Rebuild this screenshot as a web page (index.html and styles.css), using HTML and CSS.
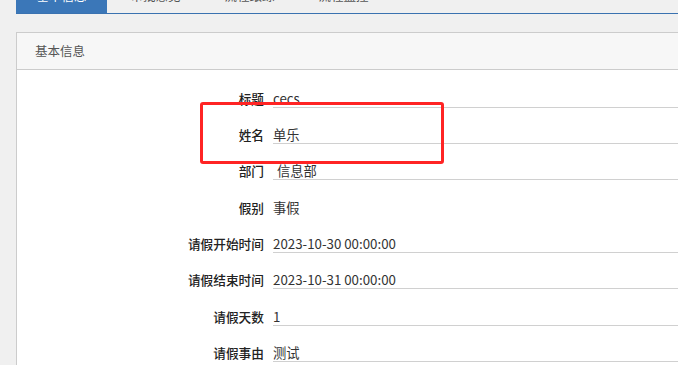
FILE: index.html
```html
<!DOCTYPE html>
<html lang="zh-CN">
<head>
<meta charset="utf-8">
<title>请假详情</title>
<link rel="stylesheet" href="styles.css">
</head>
<body>
<div class="page">
  <div class="tabs">
    <div class="tab active">基本信息</div>
    <div class="tab">审批意见</div>
    <div class="tab">流程跟踪</div>
    <div class="tab">流程监控</div>
  </div>
  <div class="panel">
    <div class="panel-head">基本信息</div>
    <div class="panel-body">
      <div class="row"><div class="label">标题</div><div class="value">cecs</div></div>
      <div class="row"><div class="label">姓名</div><div class="value">单乐</div></div>
      <div class="row"><div class="label">部门</div><div class="value indent">信息部</div></div>
      <div class="row"><div class="label">假别</div><div class="value plain">事假</div></div>
      <div class="row"><div class="label">请假开始时间</div><div class="value">2023-10-30 00:00:00</div></div>
      <div class="row"><div class="label">请假结束时间</div><div class="value">2023-10-31 00:00:00</div></div>
      <div class="row"><div class="label">请假天数</div><div class="value">1</div></div>
      <div class="row"><div class="label">请假事由</div><div class="value">测试</div></div>
    </div>
  </div>
  <div class="highlight"></div>
</div>
</body>
</html>
```
FILE: styles.css
```css
html, body {
  margin: 0;
  padding: 0;
  background: #f0f0f0;
  overflow: hidden;
}
body {
  font-family: "Noto Sans CJK SC", "Noto Sans", sans-serif;
  font-size: 13px;
  color: #333;
}
.page {
  display: flow-root;
  position: relative;
  width: 740px;
  padding-left: 16px;
  height: 365px;
  overflow: hidden;
}
.tabs {
  display: flex;
  gap: 3px;
  margin-top: -22px;
  border-bottom: 1px solid #3a72b0;
}
.tab {
  width: 91px;
  height: 35px;
  line-height: 35px;
  text-align: center;
  font-size: 12.5px;
  color: #555;
}
.tab.active {
  background: #3b77b8;
  color: #fff;
}
.panel {
  margin-top: 18px;
  border: 1px solid #cccccc;
  background: #fff;
}
.panel-head {
  height: 36px;
  line-height: 36px;
  background: #f7f7f7;
  border-bottom: 1px solid #cccccc;
  padding-left: 18px;
  color: #555;
  font-size: 12.5px;
}
.panel-body {
  padding-top: 1.5px;
  padding-bottom: 40px;
}
.row {
  display: grid;
  grid-template-columns: 247px 1fr;
  column-gap: 9px;
  padding-top: 19.3px;
  line-height: 16px;
  font-size: 12.7px;
}
.label {
  text-align: right;
  color: #222;
  font-weight: 500;
}
.value {
  border-bottom: 1px solid #d0d0d0;
  color: #333;
  font-size: 13.3px;
}
.value.indent {
  padding-left: 4px;
}
.value.plain {
  border-bottom-color: transparent;
}
.highlight {
  position: absolute;
  left: 200px;
  top: 102px;
  width: 238px;
  height: 56px;
  border: 3px solid #ff2424;
  border-radius: 3px;
}
```
